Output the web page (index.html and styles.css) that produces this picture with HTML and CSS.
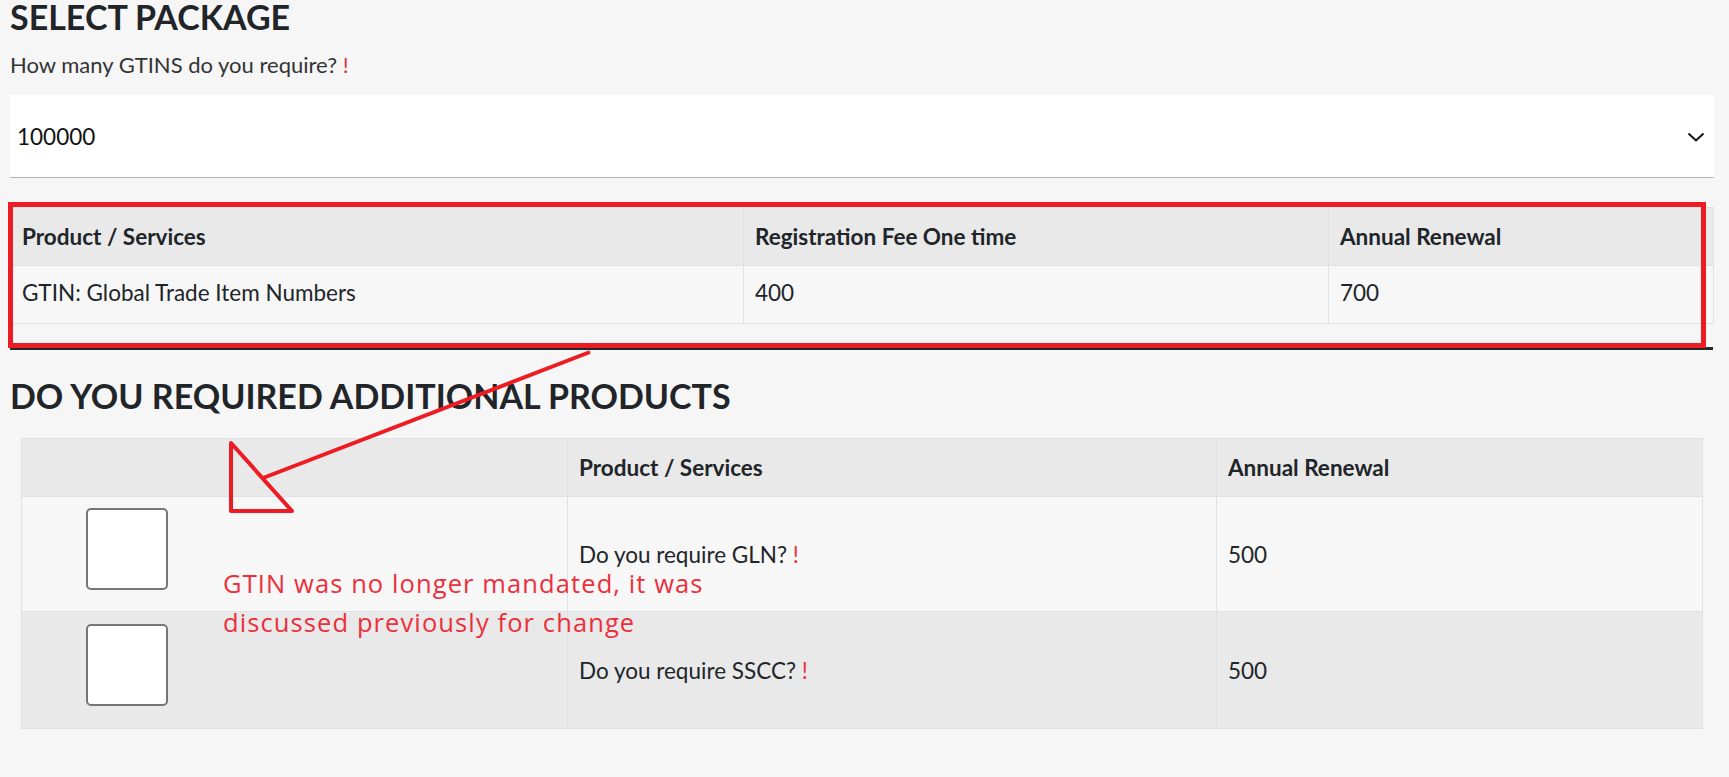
FILE: index.html
```html
<!DOCTYPE html>
<html lang="en">
<head>
<meta charset="utf-8">
<title>Select Package</title>
<link rel="stylesheet" href="styles.css">
</head>
<body>
<div class="page">
  <h1 class="title">SELECT PACKAGE</h1>
  <label class="field-label">How many GTINS do you require? <span class="req">!</span></label>
  <div class="select">
    <span class="select-value">100000</span>
    <svg class="chevron" width="18" height="10" viewBox="0 0 18 10"><path d="M1.5 1.5 L9 8.5 L16.5 1.5" fill="none" stroke="#111" stroke-width="2"/></svg>
  </div>

  <table class="grid pkg-table">
    <colgroup><col class="p1"><col class="p2"><col class="p3"></colgroup>
    <thead>
      <tr><th>Product / Services</th><th>Registration Fee One time</th><th>Annual Renewal</th></tr>
    </thead>
    <tbody>
      <tr><td>GTIN: Global Trade Item Numbers</td><td>400</td><td>700</td></tr>
    </tbody>
  </table>

  <h2 class="title title-2">DO YOU REQUIRED ADDITIONAL PRODUCTS</h2>

  <div class="addon-wrap">
    <table class="grid addon-table">
      <colgroup><col class="a1"><col class="a2"><col class="a3"></colgroup>
      <thead>
        <tr><th></th><th>Product / Services</th><th>Annual Renewal</th></tr>
      </thead>
      <tbody>
        <tr class="row-light">
          <td class="check-cell"><input type="checkbox" class="box"></td>
          <td>Do you require GLN? <span class="req">!</span></td>
          <td>500</td>
        </tr>
        <tr class="row-dark">
          <td class="check-cell check-cell-2"><input type="checkbox" class="box"></td>
          <td>Do you require SSCC? <span class="req">!</span></td>
          <td>500</td>
        </tr>
      </tbody>
    </table>
  </div>

  <svg class="annot" width="1729" height="777" viewBox="0 0 1729 777">
    <rect x="10" y="347" width="1703" height="3" fill="#24272b"/>
    <rect x="10.5" y="204.5" width="1693" height="141" fill="none" stroke="#ed1c24" stroke-width="5"/>
    <line x1="590" y1="352" x2="263" y2="478" stroke="#ed1c24" stroke-width="4"/>
    <polygon points="231,443 231,511 292,511" fill="none" stroke="#ed1c24" stroke-width="4" stroke-linejoin="round"/>
  </svg>
  <div class="annot-text">GTIN was no longer mandated, it was<br>discussed previously for change</div>
</div>
</body>
</html>
```

FILE: styles.css
```css
* { box-sizing: border-box; }

html, body {
  margin: 0;
  padding: 0;
  background: #f6f6f6;
}

body {
  font-family: Lato, "Open Sans", sans-serif;
  color: #212529;
  font-size: 22.5px;
  line-height: 33px;
}

.page {
  position: relative;
  width: 1729px;
  height: 777px;
  padding: 0 15px 0 10px;
  overflow: hidden;
}

.title {
  margin: 0;
  font-size: 34px;
  line-height: 34px;
  font-weight: 700;
  color: #212529;
}

.field-label {
  display: block;
  margin-top: 14px;
  font-size: 22px;
  color: #333;
}

.req {
  color: #e8323e;
}

.select {
  margin-top: 14px;
  height: 83px;
  background: #fff;
  border-bottom: 1px solid #b5b5b5;
  display: flex;
  align-items: center;
  justify-content: space-between;
  padding: 0 9px 0 7px;
  color: #111;
}

.chevron { display: block; margin-top: 2px; }

.grid {
  border-collapse: collapse;
  table-layout: fixed;
}

.grid th,
.grid td {
  border: 1px solid #dfe1e4;
  padding: 12px 11px;
  text-align: left;
  vertical-align: middle;
  line-height: 33px;
}

.grid th {
  background: #e9e9e9;
  font-weight: 700;
}

.grid td {
  background: #f7f7f7;
  font-weight: 400;
}

.pkg-table {
  margin-top: 29px;
  width: 1703px;
}

.pkg-table td {
  padding-top: 10px;
  padding-bottom: 14px;
}

.p1 { width: 733px; }
.p2 { width: 585px; }
.p3 { width: 385px; }

.title-2 {
  margin-top: 55px;
}

.addon-wrap {
  margin-top: 25px;
  padding-left: 11px;
}

.addon-table { width: 1681px; }

.a1 { width: 546px; }
.a2 { width: 649px; }
.a3 { width: 486px; }

.row-dark td { background: #e9e9e9; }

.grid td.check-cell {
  padding: 11px 13px 21px 64px;
  vertical-align: top;
  line-height: 0;
}

.grid td.check-cell-2 {
  padding-top: 12px;
  padding-bottom: 22px;
}

.box {
  appearance: none;
  -webkit-appearance: none;
  display: block;
  margin: 0;
  width: 82px;
  height: 82px;
  background: #fff;
  border: 2px solid #767676;
  border-radius: 5px;
}

.annot {
  position: absolute;
  left: 0;
  top: 0;
  pointer-events: none;
}

.annot-text {
  position: absolute;
  left: 223px;
  top: 564px;
  font-family: "Open Sans", sans-serif;
  font-size: 25.5px;
  letter-spacing: 1.1px;
  line-height: 39px;
  color: #ec2f3b;
  white-space: nowrap;
}
```
